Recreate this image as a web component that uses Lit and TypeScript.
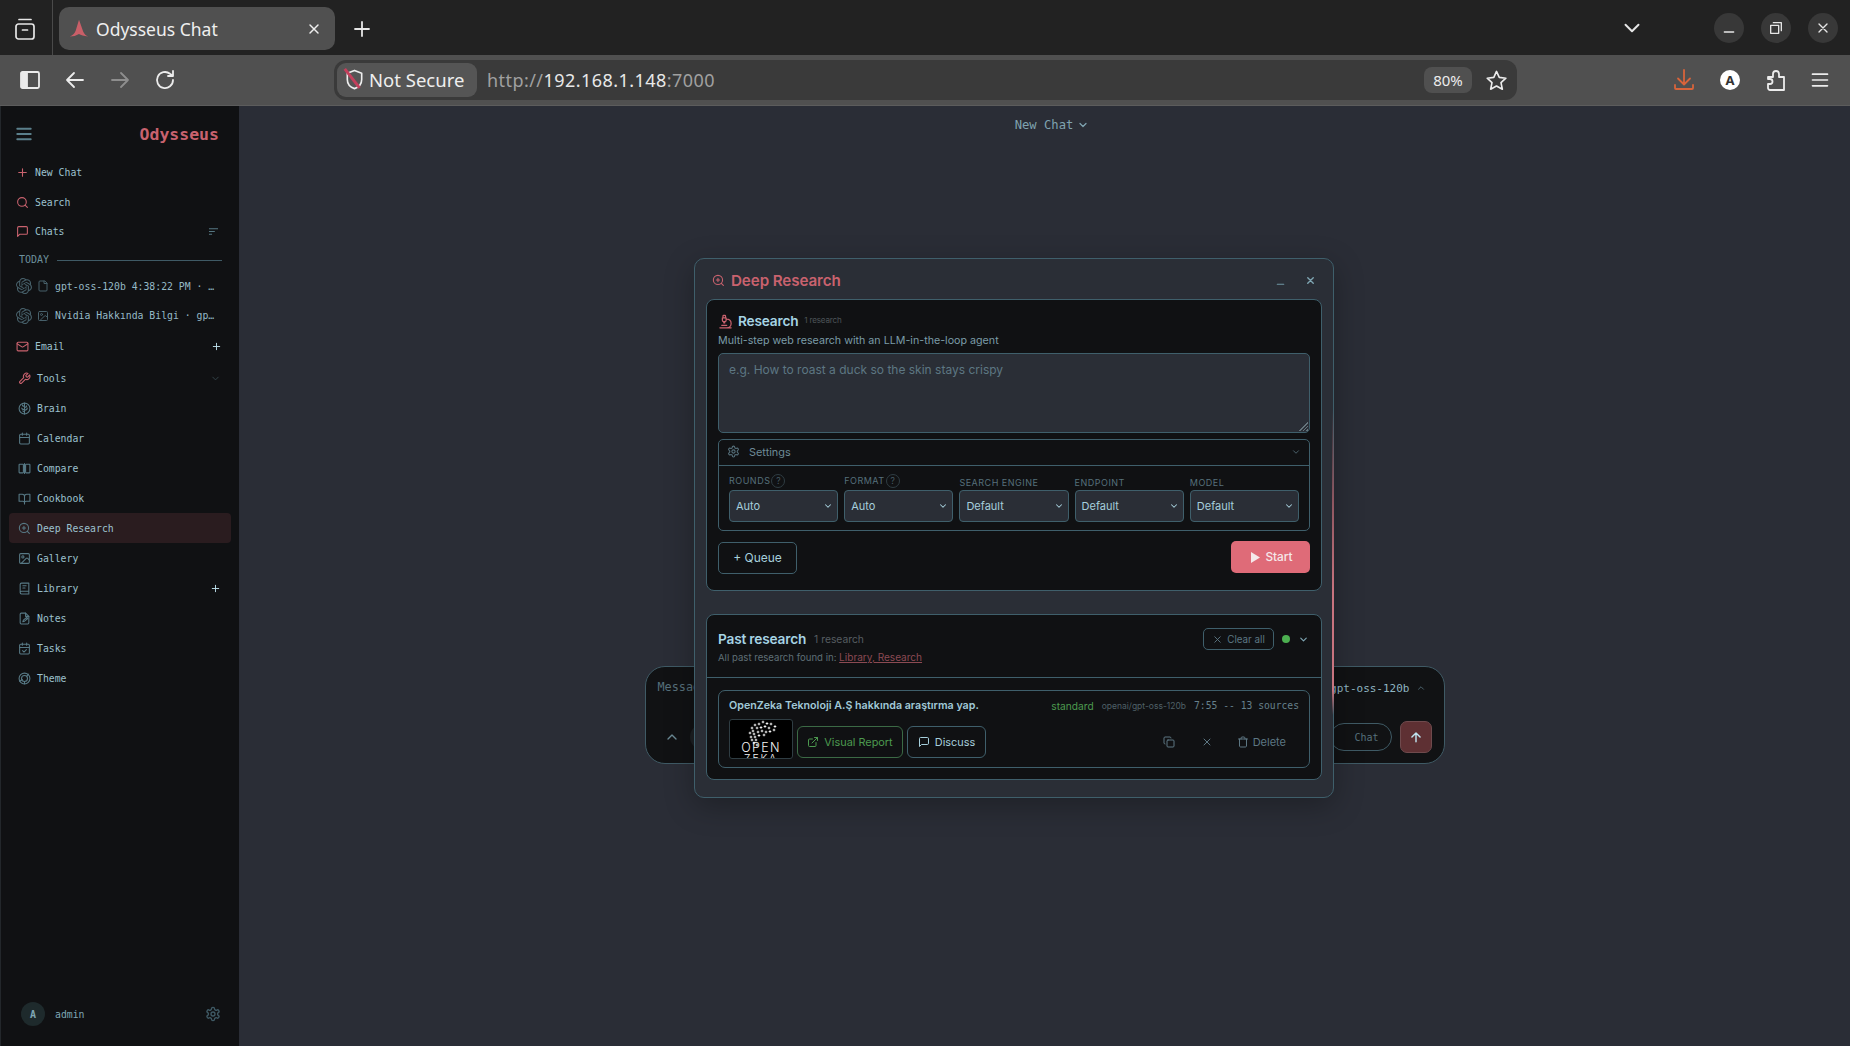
import { LitElement, html, css, svg } from "lit";
import { customElement } from "lit/decorators.js";

const gearPath = "M12.22 2h-.44a2 2 0 0 0-2 2v.18a2 2 0 0 1-1 1.73l-.43.25a2 2 0 0 1-2 0l-.15-.08a2 2 0 0 0-2.73.73l-.22.38a2 2 0 0 0 .73 2.73l.15.1a2 2 0 0 1 1 1.72v.51a2 2 0 0 1-1 1.74l-.15.09a2 2 0 0 0-.73 2.73l.22.38a2 2 0 0 0 2.73.73l.15-.08a2 2 0 0 1 2 0l.43.25a2 2 0 0 1 1 1.73V20a2 2 0 0 0 2 2h.44a2 2 0 0 0 2-2v-.18a2 2 0 0 1 1-1.73l.43-.25a2 2 0 0 1 2 0l.15.08a2 2 0 0 0 2.73-.73l.22-.39a2 2 0 0 0-.73-2.73l-.15-.08a2 2 0 0 1-1-1.74v-.5a2 2 0 0 1 1-1.74l.15-.09a2 2 0 0 0 .73-2.73l-.22-.38a2 2 0 0 0-2.73-.73l-.15.08a2 2 0 0 1-2 0l-.43-.25a2 2 0 0 1-1-1.73V4a2 2 0 0 0-2-2z";
const openaiPath = "M22.2819 9.8211a5.9847 5.9847 0 0 0-.5157-4.9108 6.0462 6.0462 0 0 0-6.5098-2.9A6.0651 6.0651 0 0 0 4.9807 4.1818a5.9847 5.9847 0 0 0-3.9977 2.9 6.0462 6.0462 0 0 0 .7427 7.0966 5.98 5.98 0 0 0 .511 4.9107 6.051 6.051 0 0 0 6.5146 2.9001A5.9847 5.9847 0 0 0 13.2599 24a6.0557 6.0557 0 0 0 5.7718-4.2058 5.9894 5.9894 0 0 0 3.9977-2.9001 6.0557 6.0557 0 0 0-.7475-7.0729zm-9.022 12.6081a4.4755 4.4755 0 0 1-2.8764-1.0408l.1419-.0804 4.7783-2.7582a.7948.7948 0 0 0 .3927-.6813v-6.7369l2.02 1.1686a.071.071 0 0 1 .038.052v5.5826a4.504 4.504 0 0 1-4.4945 4.4944zm-9.6607-4.1254a4.4708 4.4708 0 0 1-.5346-3.0137l.142.0852 4.783 2.7582a.7712.7712 0 0 0 .7806 0l5.8428-3.3685v2.3324a.0804.0804 0 0 1-.0332.0615L9.74 19.9502a4.4992 4.4992 0 0 1-6.1408-1.6464zM2.3408 7.8956a4.485 4.485 0 0 1 2.3655-1.9728V11.6a.7664.7664 0 0 0 .3879.6765l5.8144 3.3543-2.0201 1.1685a.0757.0757 0 0 1-.071 0l-4.8303-2.7865A4.504 4.504 0 0 1 2.3408 7.872zm16.5963 3.8558L13.1038 8.364 15.1192 7.2a.0757.0757 0 0 1 .071 0l4.8303 2.7913a4.4944 4.4944 0 0 1-.6765 8.1042v-5.6772a.79.79 0 0 0-.407-.667zm2.0107-3.0231l-.142-.0852-4.7735-2.7818a.7759.7759 0 0 0-.7854 0L9.409 9.2297V6.8974a.0662.0662 0 0 1 .0284-.0615l4.8303-2.7866a4.4992 4.4992 0 0 1 6.6802 4.66zM8.3065 12.863l-2.02-1.1638a.0804.0804 0 0 1-.038-.0567V6.0742a4.4992 4.4992 0 0 1 7.3757-3.4537l-.142.0805L8.704 5.459a.7948.7948 0 0 0-.3927.6813zm1.0976-2.3654l2.602-1.4998 2.6069 1.4998v2.9994l-2.5974 1.4997-2.6067-1.4997Z";

const ICONS: Record<string, unknown> = {
  plus: svg`<path d="M5 12h14M12 5v14"/>`,
  x: svg`<path d="M18 6 6 18M6 6l12 12"/>`,
  search: svg`<circle cx="11" cy="11" r="8"/><path d="m21 21-4.3-4.3"/>`,
  chat: svg`<path d="M21 15a2 2 0 0 1-2 2H7l-4 4V5a2 2 0 0 1 2-2h14a2 2 0 0 1 2 2z"/>`,
  mail: svg`<rect x="2" y="4" width="20" height="16" rx="2"/><path d="m22 7-8.97 5.7a1.94 1.94 0 0 1-2.06 0L2 7"/>`,
  wrench: svg`<path d="M14.7 6.3a1 1 0 0 0 0 1.4l1.6 1.6a1 1 0 0 0 1.4 0l3.77-3.77a6 6 0 0 1-7.94 7.94l-6.91 6.91a2.12 2.12 0 0 1-3-3l6.91-6.91a6 6 0 0 1 7.94-7.94l-3.76 3.76z"/>`,
  brain: svg`<circle cx="12" cy="12" r="10"/><path d="M12 2v20M12 8c-2 0-4-1-4-3M12 14c-2 0-5 0-5-3M12 18c-2 0-3-1-3-2M12 10c2 0 4-1 4-3M12 15c2 0 5-1 5-4"/>`,
  calendar: svg`<rect x="3" y="4" width="18" height="18" rx="2"/><path d="M16 2v4M8 2v4M3 10h18"/>`,
  compare: svg`<rect x="2" y="4" width="8" height="16" rx="1"/><rect x="14" y="4" width="8" height="16" rx="1"/><path d="M12 3v18M10 9h4M10 15h4"/>`,
  book: svg`<path d="M2 4h6a4 4 0 0 1 4 4v12a3 3 0 0 0-3-3H2zM22 4h-6a4 4 0 0 0-4 4v12a3 3 0 0 1 3-3h7zM12 20v2"/>`,
  research: svg`<circle cx="11" cy="11" r="8.5"/><path d="m21 21-3.8-3.8M11 8v6M8 11h6"/>`,
  image: svg`<rect x="3" y="3" width="18" height="18" rx="2"/><circle cx="9" cy="9" r="2"/><path d="m21 15-3.086-3.086a2 2 0 0 0-2.828 0L6 21"/>`,
  library: svg`<path d="M4 19.5v-15A2.5 2.5 0 0 1 6.5 2H20v20H6.5a2.5 2.5 0 0 1 0-5H20"/><path d="M9 7h6M9 11h4"/>`,
  notes: svg`<path d="M14 2H6a2 2 0 0 0-2 2v16a2 2 0 0 0 2 2h12a2 2 0 0 0 2-2V8z"/><path d="M14 2v6h6M9 18l1-3 6-5 2 2-6 5z"/>`,
  tasks: svg`<rect x="3" y="4" width="18" height="18" rx="2"/><path d="M16 2v4M8 2v4M3 10h18M8.5 16l2.5 2.5 4.5-4.5"/>`,
  theme: svg`<circle cx="12" cy="12" r="10"/><circle cx="12" cy="12" r="5.5"/><path d="M3 17l5-3M16 8l3-4M12 17.5v4"/>`,
  sort: svg`<path d="M3 6h18M3 12h11M3 18h5"/>`,
  chevD: svg`<path d="m6 9 6 6 6-6"/>`,
  chevU: svg`<path d="m18 15-6-6-6 6"/>`,
  gear: svg`<path d="${gearPath}"/><circle cx="12" cy="12" r="3"/>`,
  file: svg`<path d="M15 2H6a2 2 0 0 0-2 2v16a2 2 0 0 0 2 2h12a2 2 0 0 0 2-2V7z"/><path d="M14 2v5h6"/>`,
  openai: svg`<path d="${openaiPath}" fill="currentColor" stroke="none"/>`,
  microscope: svg`<path d="M6 18h8M3 22h18M14 22a7 7 0 1 0 0-14h-1M9 14h2M9 12a2 2 0 0 1-2-2V6h6v4a2 2 0 0 1-2 2ZM12 6V3a1 1 0 0 0-1-1H9a1 1 0 0 0-1 1v3"/>`,
  link: svg`<path d="M18 13v6a2 2 0 0 1-2 2H5a2 2 0 0 1-2-2V8a2 2 0 0 1 2-2h6M15 3h6v6M10 14 21 3"/>`,
  copy: svg`<rect x="8" y="8" width="14" height="14" rx="2"/><path d="M4 16c-1.1 0-2-.9-2-2V4c0-1.1.9-2 2-2h10c1.1 0 2 .9 2 2"/>`,
  trash: svg`<path d="M3 6h18M19 6v14c0 1-1 2-2 2H7c-1 0-2-1-2-2V6M8 6V4c0-1 1-2 2-2h4c1 0 2 1 2 2v2"/>`,
  up: svg`<path d="M12 20V5M5 12l7-7 7 7"/>`,
  back: svg`<path d="M20 12H4M11 5l-7 7 7 7"/>`,
  forward: svg`<path d="M4 12h16M13 5l7 7-7 7"/>`,
  reload: svg`<path d="M20 12a8 8 0 1 1-3-6.2L20 8M20 3v5h-5"/>`,
  star: svg`<path d="M12 2.5l2.9 6.3 6.9.8-5.1 4.7 1.4 6.8-6.1-3.4-6.1 3.4 1.4-6.8L2.300 9.600l6.900-.8z"/>`,
  download: svg`<path d="M12 2v14M6 10.500l6 6 6-6M3 17v3a1 1 0 0 0 1 1h16a1 1 0 0 0 1-1v-3"/>`,
  puzzle: svg`<path d="M4 9h5V6a3 3 0 0 1 6 0v3h5v13H6a2 2 0 0 1-2-2v-4h2a2.500 2.500 0 0 0 0-5H4z"/>`,
  menu: svg`<path d="M3 5h18M3 12h18M3 19h18"/>`,
  panel: svg`<rect x="3" y="4" width="18" height="16" rx="1.500"/><path d="M4 5h5v14H4z" fill="currentColor"/>`,
  archive: svg`<rect x="3" y="7" width="18" height="15" rx="2.500"/><path d="M6 2.500h12M9.500 13h5"/>`,
  restore: svg`<rect x="4" y="8" width="12" height="12"/><path d="M8 4h12v12"/>`,
  minimize: svg`<path d="M5 18h14"/>`,
  shield: svg`<path d="M12 2.500l7.500 3v6.500c0 5-3 8-7.500 9.500-4.500-1.500-7.500-4.500-7.500-9.500V5.500z"/>`,
};

const ic = (name: string, cls = "") =>
  html`<svg class="ic ${cls}" viewBox="0 0 24 24" fill="none" stroke="currentColor" stroke-width="2" stroke-linecap="round" stroke-linejoin="round">${ICONS[name]}</svg>`;

const BRAIN: [number, number][] = [
  [13, 8], [16, 5], [20, 4], [24, 2], [28, 3.500], [32, 4], [36, 6.500], [14, 11], [18, 8], [22, 7.500], [26, 6.500], [30, 8], [35, 10],
  [11, 13], [15, 14], [19, 12], [23, 11], [27, 12], [31, 11.500], [12, 17], [16, 17], [20, 15.500], [25, 15], [13, 20], [17, 20], [15, 23], [18, 25],
];

@customElement("app-root")
export class AppRoot extends LitElement {
  static styles = css`
    :host { display: block; width: 1850px; height: 1046px; overflow: hidden; background: #2a2d36; color: #a6cfdc; font-family: Inter, "Noto Sans", sans-serif; }
    * { box-sizing: border-box; }
    .ic { display: block; flex: none; width: 12px; height: 12px; }

    /* browser chrome */
    .tabs { height: 55px; background: #222222; display: flex; align-items: center; position: relative; color: #e6e6e6; font-family: "Noto Sans", sans-serif; }
    .tabs-left { width: 53px; height: 55px; border-right: 1px solid #4a4a4a; display: flex; align-items: center; justify-content: center; padding: 2px 3px 0 0; }
    .tabs-left .ic { width: 24px; height: 24px; stroke-width: 1.700; }
    .tab { margin-left: 6px; width: 276px; height: 43px; margin-top: 2px; border-radius: 10px; background: #505050; display: flex; align-items: center; padding: 0 13px 0 10px; font-size: 17.500px; color: #eeeeee; }
    .fav { width: 20px; height: 20px; margin-right: 7px; flex: none; }
    .tab .name { flex: 1; }
    .tab .ic { width: 16px; height: 16px; stroke-width: 2.200; }
    .newtab { margin-left: 15px; width: 24px; height: 24px; stroke-width: 1.800; margin-top: 2px; }
    .tabs-right { margin-left: auto; display: flex; align-items: center; padding: 1px 12px 0 0; }
    .chev { width: 26px; height: 26px; margin-right: 52px; margin-top: -1px; stroke-width: 1.800; }
    .wbtn { width: 30px; height: 30px; border-radius: 50%; background: #383838; display: flex; align-items: center; justify-content: center; margin-left: 17px; }
    .wbtn .ic { width: 16px; height: 16px; }
    .toolbar { height: 51px; background: #505050; display: flex; align-items: center; padding: 0 18px; color: #ececec; border-bottom: 1px solid #5c5c5c; }
    .navs { display: flex; gap: 21px; }
    .navs .ic { width: 24px; height: 24px; stroke-width: 1.800; }
    .navs .off { color: #8e8e8e; }
    .url { margin-left: 157px; width: 1183px; height: 40px; border-radius: 12px; background: #3a3a3a; display: flex; align-items: center; padding: 0 9px 0 3px; font-family: "Noto Sans", sans-serif; font-size: 18px; }
    .secure { width: 140px; height: 34px; border-radius: 9px; background: #555555; display: flex; align-items: center; gap: 3px; padding-left: 6px; padding-bottom: 1px; color: #eeeeee; position: relative; font-size: 18.500px; }
    .secure .ic { width: 22px; height: 22px; }
    .slash { position: absolute; left: 7px; top: 7px; width: 24px; height: 2.500px; background: #c3405c; transform: rotate(52deg); transform-origin: 3px 1px; }
    .addr { margin-left: 10px; letter-spacing: .44px; flex: 1; color: #a0a0a0; }
    .addr b { font-weight: 400; color: #e8e8e8; }
    .zoom { width: 48px; height: 26px; border-radius: 8px; background: #505050; font-size: 15px; display: flex; align-items: center; justify-content: center; margin-right: 13px; }
    .url .ic { width: 23px; height: 23px; stroke-width: 1.700; }
    .actions { margin-left: auto; display: flex; gap: 22px; align-items: center; }
    .actions .ic { width: 24px; height: 24px; stroke-width: 1.800; }
    .actions .ic.m { width: 20px; height: 20px; margin-right: 2px; stroke-width: 2; }
    .orange { color: #d7643b; }
    .avatar-a { width: 20px; height: 20px; border-radius: 50%; background: #ffffff; color: #333333; font: 700 13px "Noto Sans", sans-serif; display: flex; align-items: center; justify-content: center; margin: 0 2px; }

    /* page */
    .page { display: flex; height: 940px; }
    .side { width: 239px; flex: none; background: #101113; border-left: 1px solid #23272b; display: flex; flex-direction: column; font-family: "DejaVu Sans Mono", monospace; font-size: 9.800px; color: #9dc2cf; }
    .side-head { height: 51px; padding: 5px 20px 0 14px; display: flex; align-items: center; justify-content: space-between; }
    .side-head .ic { width: 18px; height: 18px; color: #5b808c; stroke-width: 2.500; }
    .brand { font-size: 16.500px; font-weight: 700; color: #c8626e; }
    .row { height: 30px; display: flex; align-items: center; gap: 6px; padding-left: 15px; flex: none; white-space: nowrap; }
    .row .ic { color: #c9626e; width: 13px; height: 13px; }
    .row.tight { margin-top: -1px; }
    .row.email { margin-top: 1px; }
    .row .ic.end { margin-left: auto; margin-right: 17px; width: 11px; height: 11px; color: #5b808c; }
    .row .ic.end.sort { margin-right: 20px; }
    .row .ic.end.white { color: #bfe3ef; }
    .row .ic.end.dim { color: #35464c; }
    .today { height: 24px; margin-top: 1px; padding: 0 17px 0 18px; display: flex; align-items: center; gap: 8px; font-size: 10px; color: #6d909c; flex: none; }
    .today i { flex: 1; height: 1px; background: #3f5a65; margin-top: 2px; }
    .chat { height: 30px; display: flex; align-items: center; padding-left: 15px; color: #95b9c6; flex: none; }
    .chat.short { height: 29px; }
    .chat .ai { width: 16px; height: 16px; color: #47606a; }
    .chat .ft { width: 12px; height: 12px; margin-left: 5px; color: #47606a; }
    .chat span { margin-left: 6px; width: 163px; overflow: hidden; white-space: nowrap; text-overflow: ellipsis; }
    .tools { margin: 2px 8px 0 8px; }
    .tools .row { padding-left: 9px; }
    .tools .row .ic:first-child { color: #577985; }
    .tools .row .ic.end { margin-right: 10px; }
    .tools .row.first .ic:first-child { color: #c9626e; }
    .tools .row.active { background: #2a1c1f; border-radius: 4px; }
    .foot { margin-top: auto; height: 64px; padding: 0 18px 0 20px; display: flex; align-items: center; }
    .ava { width: 24px; height: 24px; border-radius: 50%; background: #1e2a2c; display: flex; align-items: center; justify-content: center; font-weight: 700; font-size: 10px; color: #7fa6b3; }
    .foot span { margin-left: 10px; color: #7fa6b3; }
    .foot .ic { margin-left: auto; width: 16px; height: 16px; color: #3f5a65; }

    .main { flex: 1; position: relative; display: flex; flex-direction: column; align-items: center; min-width: 0; }
    .mhead { height: 37px; display: flex; align-items: center; gap: 4px; font-family: "DejaVu Sans Mono", monospace; font-size: 12.200px; color: #7fa3b0; margin-left: 15px; flex: none; }
    .mhead .ic { width: 12px; height: 12px; stroke-width: 2.500; }
    .composer { margin-top: 523px; width: 800px; height: 98px; border-radius: 20px; background: #111214; border: 1px solid #3f5a65; padding: 0 12px; font-family: "DejaVu Sans Mono", monospace; display: flex; flex-direction: column; }
    .c-top { display: flex; align-items: center; justify-content: space-between; height: 42px; font-size: 11.800px; }
    .c-top .ph { color: #56707b; margin-top: -2px; }
    .c-top .mdl { display: flex; align-items: center; gap: 6px; color: #8fb5c2; font-size: 11px; padding-right: 6px; }
    .c-top .ic { width: 10px; height: 10px; color: #56707b; }
    .c-bot { display: flex; align-items: center; height: 44px; margin-top: 6px; }
    .c-bot .coll { width: 16px; height: 16px; margin-left: 6px; color: #6b8a95; }
    .lpill { width: 40px; height: 26px; border-radius: 13px; background: #1d2024; margin-left: 10px; }
    .pill { margin-left: auto; height: 28px; width: 62px; border: 1px solid #3f5a65; border-radius: 14px; display: flex; align-items: center; justify-content: center; padding-left: 12px; font-size: 10px; color: #56707b; margin-right: 8px; }
    .send { width: 32px; height: 32px; border-radius: 7px; background: #5e3033; border: 1px solid #6f4a4d; display: flex; align-items: center; justify-content: center; color: #bfe3ef; }
    .send .ic { width: 14px; height: 14px; stroke-width: 2.500; }

    /* modal */
    .modal { position: absolute; left: 455px; top: 152px; width: 640px; height: 540px; background: #2a2e36; border: 1px solid #3f5f6b; border-radius: 10px; box-shadow: 0 8px 30px rgba(0,0,0,.28); padding: 0 11px; display: flex; flex-direction: column; }
    .glow { position: absolute; right: -1px; top: 150px; width: 2px; height: 306px; background: linear-gradient(to bottom, transparent 0%, #8d5660 30%, #c8747f 60%, #c8747f 92%, transparent 100%); }
    .m-head { height: 40px; padding-top: 2px; display: flex; align-items: center; color: #c9626e; flex: none; }
    .m-head .ic { width: 13px; height: 13px; margin-left: 6px; }
    .m-head h1 { margin: 0 0 0 6px; font-size: 15.200px; font-weight: 600; letter-spacing: -.1px; }
    .m-head .ic.wb { width: 11px; height: 11px; color: #6f97a4; stroke-width: 2.500; }
    .m-head .ic.wb.min { margin-left: auto; margin-top: 2px; }
    .m-head .ic.wb.cl { margin-left: 19px; margin-right: 6px; stroke-width: 3; color: #7fa6b3; }
    .card { background: #101113; border: 1px solid #3f5f6b; border-radius: 8px; padding: 0 11px; flex: none; }
    .c1 { height: 292px; }
    .c2 { height: 166px; margin-top: 23px; padding: 0; }
    .t-row { height: 34px; padding-top: 8px; display: flex; align-items: center; }
    .t-row .ic { width: 15px; height: 15px; color: #c9626e; margin-right: 5px; }
    .t-row strong { font-size: 13.700px; font-weight: 600; color: #a6d4e4; letter-spacing: -.2px; }
    .t-row small { font-size: 8.100px; color: #4d5458; margin-left: 6px; margin-top: -3px; letter-spacing: -.2px; }
    .sub { font-size: 10.700px; line-height: 14px; color: #7b9ca8; height: 19px; }
    .ta { height: 80px; background: #2a2e36; border: 1px solid #3f5f6b; border-radius: 5px; padding: 8px 10px; font-size: 12px; color: #5d7783; position: relative; }
    .grip { position: absolute; right: 1px; bottom: 1px; width: 11px; height: 11px; background: repeating-linear-gradient(135deg, transparent 0 1.500px, #66757c 1.500px 2.500px); clip-path: polygon(100% 0, 100% 100%, 0 100%); }
    .settings { margin-top: 6px; height: 92px; border: 1px solid #3f5f6b; border-radius: 5px; }
    .s-head { height: 26px; border-bottom: 1px solid #3f5f6b; display: flex; align-items: center; padding: 0 8px 2px 8px; font-size: 10.900px; color: #6d8a96; }
    .s-head .ic { width: 13px; height: 13px; margin-right: 9px; color: #56707b; }
    .s-head .ic.c { width: 10px; height: 10px; margin: 0 0 0 auto; }
    .grid { display: grid; grid-template-columns: repeat(5, 1fr); gap: 6px; padding: 0 10px; }
    .lab { height: 24px; display: flex; align-items: flex-end; padding-bottom: 2px; font-size: 9px; letter-spacing: .5px; color: #56707b; white-space: nowrap; }
    .lab.q { padding-bottom: 4.500px; }
    .lab em { width: 14px; height: 14px; border: 1px solid #2f3d43; border-radius: 50%; font-style: normal; font-size: 8.500px; display: flex; align-items: center; justify-content: center; margin-left: 1px; margin-bottom: -2px; letter-spacing: 0; color: #465a63; }
    .sel { height: 32px; background: #2a2e36; border: 1px solid #3f5f6b; border-radius: 4px; display: flex; align-items: center; justify-content: space-between; padding: 0 4px 0 6px; font-size: 11px; color: #a6cfdc; }
    .sel .ic { width: 10px; height: 10px; color: #a6cfdc; stroke-width: 2.500; }
    .act { display: flex; justify-content: space-between; align-items: flex-start; margin-top: 10px; }
    .queue { width: 79px; height: 32px; margin-top: 1px; padding-bottom: 1px; border: 1px solid #3f5f6b; border-radius: 5px; display: flex; align-items: center; justify-content: center; font-size: 12px; color: #a6cfdc; }
    .start { width: 79px; height: 32px; background: #df6b78; border-radius: 5px; display: flex; align-items: center; justify-content: center; gap: 5px; padding-left: 2px; font-size: 11.800px; font-weight: 500; color: #f5e8ea; }
    .start svg { width: 10px; height: 11px; fill: #f5e8ea; display: block; }
    .p-head { height: 63px; border-bottom: 1px solid #3f5f6b; padding: 13px 11px 0; display: flex; justify-content: space-between; }
    .p-head strong { font-size: 13.700px; font-weight: 600; color: #a6d4e4; letter-spacing: -.2px; }
    .p-head small { font-size: 10.300px; color: #565d61; margin-left: 8px; }
    .p-l > div:first-child { height: 21px; display: flex; align-items: center; }
    .p-l p { margin: 2px 0 0; font-size: 9.600px; color: #5f6f76; }
    .p-l a { font-size: 10.050px; color: #8c4a53; text-decoration: underline; }
    .p-r { display: flex; align-items: center; height: 22px; }
    .clear { width: 71px; height: 22px; border: 1px solid #3f5f6b; border-radius: 5px; display: flex; align-items: center; justify-content: center; gap: 4px; font-size: 9.800px; color: #5d7783; }
    .clear .ic { width: 11px; height: 11px; }
    .dot { width: 8px; height: 8px; border-radius: 50%; background: #4caf50; margin-left: 8px; }
    .p-r > .ic { width: 11px; height: 11px; margin: 0 1px 0 8px; color: #7fa6b3; stroke-width: 2.500; }
    .item { margin: 12px 11px 0; height: 78px; border: 1px solid #3f5f6b; border-radius: 7px; padding: 0 10px; display: flex; flex-direction: column; }
    .i-top { height: 28px; padding-top: 1px; display: flex; align-items: center; flex: none; }
    .i-top b { font-size: 10.700px; font-weight: 600; color: #a0c9d8; }
    .i-top .std { margin-left: auto; font-size: 10.200px; color: #4c9a4f; }
    .i-top .mod { margin-left: 8px; font-size: 8.500px; color: #4f6067; }
    .i-top .tm { margin-left: 8px; font: 9.700px "DejaVu Sans Mono", monospace; color: #66808b; }
    .i-bot { display: flex; align-items: flex-start; height: 40px; }
    .thumb { width: 64px; height: 40px; background: #000000; border: 1px solid #2f3d43; border-radius: 3px; overflow: hidden; position: relative; flex: none; }
    .thumb svg { position: absolute; left: 9px; top: 0; width: 46px; height: 28px; display: block; }
    .thumb div { position: absolute; left: 0; right: 0; text-align: center; font: 300 12.500px/12px Inter, sans-serif; letter-spacing: 1.300px; color: #f4f4f4; }
    .thumb .o { top: 22px; }
    .thumb .z { top: 33px; font-size: 10.500px; letter-spacing: 1.800px; }
    .btn { height: 32px; margin: 7px 0 0 4px; border: 1px solid #3f5f6b; border-radius: 6px; display: flex; align-items: center; justify-content: center; gap: 5px; font-size: 10.900px; color: #a6cfdc; flex: none; }
    .btn .ic { width: 12px; height: 12px; }
    .btn.v { width: 106px; color: #4c9a4f; border-color: #3b6a45; }
    .btn.d { width: 79px; }
    .tools2 { margin: 7px 13px 0 auto; height: 32px; display: flex; align-items: center; color: #5d7783; font-size: 11px; }
    .tools2 .ic { width: 12px; height: 12px; }
    .tools2 .xx { margin-left: 26px; }
    .tools2 .tr { margin-left: 24px; margin-right: 4px; }
  `;

  private tool(icon: string, name: string, cls = "", end?: unknown) {
    return html`<div class="row ${cls}">${ic(icon)}<span>${name}</span>${end ?? ""}</div>`;
  }

  render() {
    return html`
      <div class="tabs">
        <div class="tabs-left">${ic("archive")}</div>
        <div class="tab">
          <svg class="fav" viewBox="0 0 24 24"><path d="M12 1 L17 15 Q19 20 23 21 Q15 20 12 18 Q7 21 1 21 Q6 19 8 14 Z" fill="#c95f68"/></svg>
          <span class="name">Odysseus Chat</span>
          ${ic("x")}
        </div>
        ${ic("plus", "newtab")}
        <div class="tabs-right">
          ${ic("chevD", "chev")}
          <div class="wbtn">${ic("minimize")}</div>
          <div class="wbtn">${ic("restore")}</div>
          <div class="wbtn">${ic("x")}</div>
        </div>
      </div>
      <div class="toolbar">
        <div class="navs">
          ${ic("panel")} ${ic("back")} ${ic("forward", "off")} ${ic("reload")}
        </div>
        <div class="url">
          <div class="secure">${ic("shield")}<i class="slash"></i><span>Not Secure</span></div>
          <div class="addr">http://<b>192.168.1.148</b>:7000</div>
          <div class="zoom">80%</div>
          ${ic("star")}
        </div>
        <div class="actions">
          ${ic("download", "orange")}
          <div class="avatar-a">A</div>
          ${ic("puzzle")} ${ic("menu", "m")}
        </div>
      </div>
      <div class="page">
        <aside class="side">
          <div class="side-head">${ic("menu")}<span class="brand">Odysseus</span></div>
          <div class="row">${ic("plus")}<span>New Chat</span></div>
          <div class="row">${ic("search")}<span>Search</span></div>
          <div class="row tight">${ic("chat")}<span>Chats</span>${ic("sort", "end sort")}</div>
          <div class="today">TODAY<i></i></div>
          <div class="chat">${ic("openai", "ai")}${ic("file", "ft")}<span>gpt-oss-120b 4:38:22 PM · Deep Research</span></div>
          <div class="chat short">${ic("openai", "ai")}${ic("image", "ft")}<span>Nvidia Hakkında Bilgi · gpt-oss-120b</span></div>
          <div class="row email">${ic("mail")}<span>Email</span>${ic("plus", "end white")}</div>
          <div class="tools">
            ${this.tool("wrench", "Tools", "first", ic("chevD", "end dim"))}
            ${this.tool("brain", "Brain")}
            ${this.tool("calendar", "Calendar")}
            ${this.tool("compare", "Compare")}
            ${this.tool("book", "Cookbook")}
            ${this.tool("research", "Deep Research", "active")}
            ${this.tool("image", "Gallery")}
            ${this.tool("library", "Library", "", ic("plus", "end white"))}
            ${this.tool("notes", "Notes")}
            ${this.tool("tasks", "Tasks")}
            ${this.tool("theme", "Theme")}
          </div>
          <div class="foot"><div class="ava">A</div><span>admin</span>${ic("gear")}</div>
        </aside>
        <main class="main">
          <div class="mhead">New Chat ${ic("chevD")}</div>
          <div class="composer">
            <div class="c-top"><span class="ph">Message</span><span class="mdl">gpt-oss-120b ${ic("chevU")}</span></div>
            <div class="c-bot">${ic("chevU", "coll")}<div class="lpill"></div><div class="pill">Chat</div><div class="send">${ic("up")}</div></div>
          </div>
          <section class="modal">
            <i class="glow"></i>
            <div class="m-head">
              ${ic("research")}<h1>Deep Research</h1>
              ${ic("minimize", "wb min")}${ic("x", "wb cl")}
            </div>
            <div class="card c1">
              <div class="t-row">${ic("microscope")}<strong>Research</strong><small>1 research</small></div>
              <div class="sub">Multi-step web research with an LLM-in-the-loop agent</div>
              <div class="ta">e.g. How to roast a duck so the skin stays crispy<i class="grip"></i></div>
              <div class="settings">
                <div class="s-head">${ic("gear")}<span>Settings</span>${ic("chevD", "c")}</div>
                <div class="grid">
                  <div><div class="lab q">ROUNDS<em>?</em></div><div class="sel">Auto${ic("chevD")}</div></div>
                  <div><div class="lab q">FORMAT<em>?</em></div><div class="sel">Auto${ic("chevD")}</div></div>
                  <div><div class="lab">SEARCH ENGINE</div><div class="sel">Default${ic("chevD")}</div></div>
                  <div><div class="lab">ENDPOINT</div><div class="sel">Default${ic("chevD")}</div></div>
                  <div><div class="lab">MODEL</div><div class="sel">Default${ic("chevD")}</div></div>
                </div>
              </div>
              <div class="act">
                <div class="queue">+ Queue</div>
                <div class="start"><svg viewBox="0 0 10 11"><path d="M1 0v11l9-5.500z"/></svg> Start</div>
              </div>
            </div>
            <div class="card c2">
              <div class="p-head">
                <div class="p-l">
                  <div><strong>Past research</strong><small>1 research</small></div>
                  <p>All past research found in: <a>Library, Research</a></p>
                </div>
                <div class="p-r"><div class="clear">${ic("x")}Clear all</div><i class="dot"></i>${ic("chevD")}</div>
              </div>
              <div class="item">
                <div class="i-top">
                  <b>OpenZeka Teknoloji A.Ş hakkında araştırma yap.</b>
                  <span class="std">standard</span>
                  <span class="mod">openai/gpt-oss-120b</span>
                  <span class="tm">7:55 -- 13 sources</span>
                </div>
                <div class="i-bot">
                  <div class="thumb">
                    <svg viewBox="0 0 46 28">
                      ${BRAIN.map(([x, y]) => svg`<path d="M${x - 1.300} ${y}h2.600M${x} ${y - 1.300}v2.600" stroke="#fff" stroke-width=".9"/>`)}
                    </svg>
                    <div class="o">OPEN</div>
                    <div class="z">ZEKA</div>
                  </div>
                  <div class="btn v">${ic("link")}Visual Report</div>
                  <div class="btn d">${ic("chat")}Discuss</div>
                  <div class="tools2">
                    ${ic("copy")}${ic("x", "xx")}${ic("trash", "tr")}<span>Delete</span>
                  </div>
                </div>
              </div>
            </div>
          </section>
        </main>
      </div>
    `;
  }
}
